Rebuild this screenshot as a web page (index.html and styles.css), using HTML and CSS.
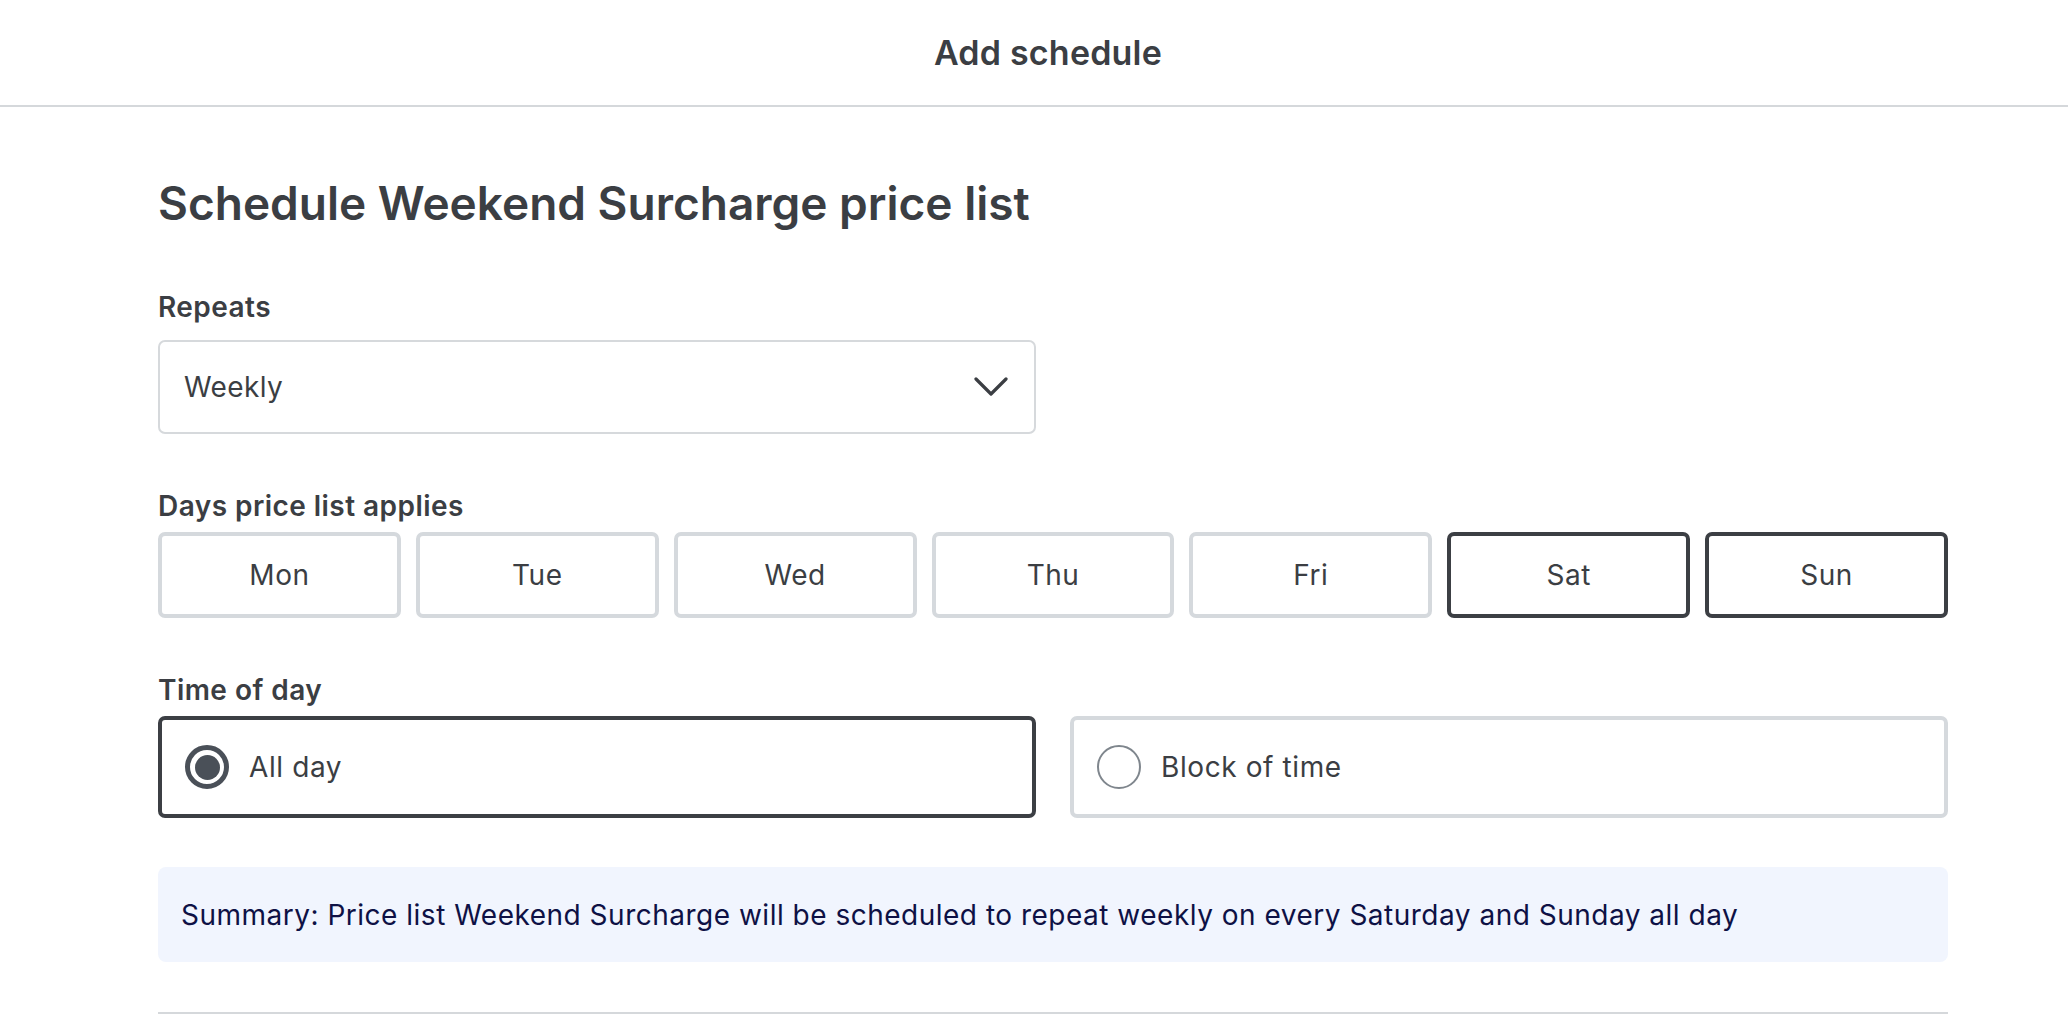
FILE: index.html
```html
<!DOCTYPE html>
<html lang="en">
<head>
<meta charset="utf-8">
<title>Add schedule</title>
<link rel="stylesheet" href="styles.css">
</head>
<body>
<header class="topbar">
  <div class="topbar-title">Add schedule</div>
</header>
<main class="content">
  <h1 class="page-title">Schedule Weekend Surcharge price list</h1>

  <div class="field-label">Repeats</div>
  <div class="form-grid">
    <div class="select">
      <span class="select-value">Weekly</span>
      <svg class="chevron" width="34" height="20" viewBox="0 0 34 20" aria-hidden="true">
        <path d="M2 2 L17 17 L32 2" fill="none" stroke="#3b3e43" stroke-width="3.2" stroke-linecap="round" stroke-linejoin="round"/>
      </svg>
    </div>
  </div>

  <div class="field-label label-days">Days price list applies</div>
  <div class="days">
    <div class="day">Mon</div>
    <div class="day">Tue</div>
    <div class="day">Wed</div>
    <div class="day">Thu</div>
    <div class="day">Fri</div>
    <div class="day day-selected">Sat</div>
    <div class="day day-selected">Sun</div>
  </div>

  <div class="field-label label-days">Time of day</div>
  <div class="form-grid">
    <div class="option option-selected">
      <span class="radio radio-on"><span class="radio-dot"></span></span>
      <span class="option-text">All day</span>
    </div>
    <div class="option">
      <span class="radio"></span>
      <span class="option-text">Block of time</span>
    </div>
  </div>

  <div class="summary">Summary: Price list Weekend Surcharge will be scheduled to repeat weekly on every Saturday and Sunday all day</div>

  <div class="divider"></div>
</main>
</body>
</html>
```
FILE: styles.css
```css
* { box-sizing: border-box; }
html, body { margin: 0; padding: 0; background: #ffffff; }
body {
  font-family: Inter, "Noto Sans", "Liberation Sans", sans-serif;
  color: #3b3e43;
  overflow: hidden;
}
.topbar {
  height: 107px;
  border-bottom: 2px solid #d5d8db;
  display: flex;
  justify-content: center;
}
.topbar-title {
  font-size: 34px;
  font-weight: 600;
  line-height: 105px;
  letter-spacing: 0.2px;
  padding-left: 28px;
}
.content {
  width: 1948px;
  padding-left: 158px;
}
.page-title {
  margin: 68px 0 0 0;
  font-size: 46px;
  line-height: 56px;
  font-weight: 600;
  letter-spacing: 0;
}
.field-label {
  margin-top: 58px;
  font-size: 28px;
  line-height: 36px;
  font-weight: 600;
  letter-spacing: 0.45px;
}
.label-days { margin-top: 54px; }
.form-grid {
  display: grid;
  grid-template-columns: 1fr 1fr;
  column-gap: 34px;
  margin-top: 15px;
}
.select {
  height: 94px;
  border: 2px solid #d6d9dc;
  border-radius: 7px;
  display: flex;
  align-items: center;
  justify-content: space-between;
  padding: 0 26px 0 24px;
}
.select-value {
  font-size: 28px;
  font-weight: 400;
  letter-spacing: 0.4px;
}
.chevron { display: block; }
.days {
  display: grid;
  grid-template-columns: repeat(7, 1fr);
  column-gap: 15px;
  margin-top: 8px;
}
.day {
  height: 86px;
  border: 4px solid #d5d9dd;
  border-radius: 7px;
  display: flex;
  align-items: center;
  justify-content: center;
  font-size: 28px;
  letter-spacing: 0.5px;
}
.day-selected { border-color: #3c3f44; }
.label-days + .form-grid { margin-top: 8px; }
.option {
  height: 102px;
  border: 4px solid #d5d9dd;
  border-radius: 7px;
  display: flex;
  align-items: center;
  gap: 20px;
  padding-left: 23px;
}
.option-selected { border-color: #3c3f44; }
.radio {
  width: 44px;
  height: 44px;
  border-radius: 50%;
  border: 2px solid #7f868d;
  display: flex;
  align-items: center;
  justify-content: center;
  flex: none;
}
.radio-on { border: 5px solid #4a5058; }
.radio-dot {
  width: 25px;
  height: 25px;
  border-radius: 50%;
  background: #4a5058;
}
.option-text { font-size: 28px; letter-spacing: 0.6px; }
.summary {
  margin-top: 49px;
  height: 95px;
  background: #f1f5fe;
  border-radius: 8px;
  display: flex;
  align-items: center;
  padding-left: 23px;
  font-size: 28px;
  letter-spacing: 0.5px;
  color: #0e1145;
}
.divider {
  margin-top: 50px;
  height: 2px;
  background: #d5d8db;
}
```
